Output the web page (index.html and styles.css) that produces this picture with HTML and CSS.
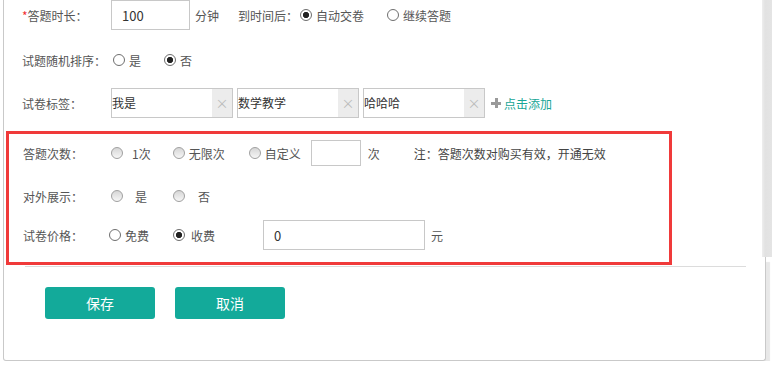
FILE: index.html
```html
<!DOCTYPE html>
<html lang="zh">
<head>
  <meta charset="UTF-8" />
  <title>试卷设置</title>
  <link rel="stylesheet" href="styles.css">
</head>
<body>

  <div class="panel">
    <div class="scroll">
      <div class="content">

        <div class="row row-time">
          <span class="label"><i class="req">*</i>答题时长：</span>
          <input class="field time-input" type="text" value="100" />
          <span class="unit">分钟</span>
          <span class="sub-label">到时间后：</span>
          <label class="opt opt-auto"><input type="radio" name="end" checked />自动交卷</label>
          <label class="opt"><input type="radio" name="end" />继续答题</label>
        </div>

        <div class="row row-order">
          <span class="label">试题随机排序：</span>
          <label class="opt opt-yes"><input type="radio" name="order" />是</label>
          <label class="opt"><input type="radio" name="order" checked />否</label>
        </div>

        <div class="row row-tags">
          <span class="label">试卷标签：</span>
          <div class="tag"><span class="tag-text">我是</span><span class="tag-del">×</span></div>
          <div class="tag"><span class="tag-text">数学教学</span><span class="tag-del">×</span></div>
          <div class="tag"><span class="tag-text">哈哈哈</span><span class="tag-del">×</span></div>
          <a class="add-tag"><span class="plus"></span>点击添加</a>
        </div>

        <div class="highlight">
          <div class="row row-times">
            <span class="label">答题次数：</span>
            <label class="opt soft opt-one"><input type="radio" name="times" /><span class="gap9">1次</span></label>
            <label class="opt soft opt-inf"><input type="radio" name="times" />无限次</label>
            <label class="opt soft opt-custom"><input type="radio" name="times" />自定义</label>
            <input class="field times-input" type="text" value="" />
            <span class="unit">次</span>
            <span class="note">注：答题次数对购买有效，开通无效</span>
          </div>

          <div class="row row-show">
            <span class="label">对外展示：</span>
            <label class="opt soft opt-show-yes"><input type="radio" name="show" /><span class="gap12">是</span></label>
            <label class="opt soft"><input type="radio" name="show" /><span class="gap13">否</span></label>
          </div>

          <div class="row row-price">
            <span class="label">试卷价格：</span>
            <label class="opt opt-free"><input type="radio" name="price" />免费</label>
            <label class="opt opt-paid"><input type="radio" name="price" checked />收费</label>
            <input class="field price-input" type="text" value="0" />
            <span class="unit">元</span>
          </div>
        </div>

      </div>
      <div class="scrollbar"></div>
    </div>

    <div class="footer">
      <div class="divider"></div>
      <div class="actions">
        <button class="btn">保存</button>
        <button class="btn">取消</button>
      </div>
    </div>
  </div>

</body>
</html>
```

FILE: styles.css
```css
body {
  margin: 0;
  padding: 0;
  background: #fff;
  font-family: "Noto Sans CJK SC", "Microsoft YaHei", sans-serif;
  font-size: 12px;
  color: #555;
}

.panel {
  margin-left: 3px;
  width: 769px;
}

.scroll {
  display: flex;
  height: 257px;
  border-left: 1px solid #c9c9c9;
}

.content {
  width: 758px;
  background: #fff;
}

.scrollbar {
  width: 10px;
  background: linear-gradient(to right, #eeeeee, #e2e2e2 30%, #e4e4e4);
}

.row {
  display: flex;
  align-items: center;
  height: 30px;
  padding-left: 18px;
  white-space: nowrap;
}

.label {
  width: 89px;
  flex-shrink: 0;
}

.req {
  font-style: normal;
  color: #f23030;
}

.row-order { margin-top: 15px; }
.row-tags { margin-top: 13px; }

.field {
  box-sizing: border-box;
  height: 30px;
  border: 1px solid #c8c8c8;
  font-family: inherit;
  font-size: 13px;
  color: #333;
  padding: 0 10px;
  outline: none;
}

.time-input { width: 79px; }

.unit { margin-left: 5px; }

.sub-label { margin-left: 19px; }

.opt {
  display: inline-flex;
  align-items: center;
  margin-right: 21px;
}

.opt input {
  -webkit-appearance: none;
  appearance: none;
  box-sizing: border-box;
  width: 12px;
  height: 12px;
  margin: 0 4px 0 2px;
  border: 1px solid #6e6e6e;
  border-radius: 50%;
  background: #fff;
}

.opt input:checked {
  background: radial-gradient(circle, #222 0 2.8px, #fff 3.4px);
}

.opt.soft input {
  margin: 0;
  border-color: #a0a0a0;
  background: linear-gradient(#d6d6d6, #f6f6f6);
}

/* tags */
.tag {
  display: flex;
  box-sizing: border-box;
  width: 122px;
  height: 30px;
  margin-right: 4px;
  border: 1px solid #c8c8c8;
}

.tag-text {
  flex: 1;
  line-height: 28px;
  color: #333;
}

.tag-del {
  width: 20px;
  background: #ececec;
  color: #bbb;
  text-align: center;
  line-height: 27px;
  font-size: 13px;
}

.add-tag {
  display: inline-flex;
  align-items: center;
  margin-left: 2px;
  color: #18a696;
  font-size: 12px;
}

.plus {
  position: relative;
  width: 10px;
  height: 10px;
  margin-right: 3px;
}

.plus::before,
.plus::after {
  content: "";
  position: absolute;
  background: #9a9a9a;
}

.plus::before { left: 0; top: 4px; width: 10px; height: 3px; }
.plus::after { left: 4px; top: 0; width: 3px; height: 10px; }

/* red box */
.highlight {
  position: relative;
  box-sizing: border-box;
  width: 666px;
  height: 134px;
  margin: 13px 0 0 2px;
  padding-top: 6px;
  border: 3px solid #f03a3a;
}

.highlight .row {
  padding-left: 14px;
}

.highlight .label { width: 88px; }

.row-times { height: 26px; }
.row-show { height: 26px; margin-top: 17px; }
.row-price { margin-top: 11px; }

.gap9 { margin-left: 9px; }
.gap12 { margin-left: 12px; }
.gap13 { margin-left: 13px; }

.opt-one { margin-right: 22px; }
.opt.soft.opt-inf input,
.opt.soft.opt-custom input { margin-right: 4px; }
.opt-inf { margin-right: 24px; }
.opt-custom { margin-right: 10px; }
.opt-show-yes { margin-right: 26px; }

.times-input {
  width: 50px;
  height: 26px;
}

.row-times .unit { margin-left: 7px; }

.note {
  margin-left: 34px;
  color: #444;
}

.row-price .label { width: 84px; }
.opt-free { margin-right: 22px; }
.opt-paid input { margin-right: 6px; }
.opt-paid { margin-right: 48px; }

.price-input { width: 162px; }
.row-price .unit { margin-left: 6px; }

/* footer */
.footer {
  box-sizing: border-box;
  width: 763px;
  height: 104px;
  padding-top: 9px;
  background: #fff;
  border: 1px solid #c9c9c9;
  border-top: 0;
  border-radius: 0 0 3px 3px;
  box-shadow: 4px 5px 1px #e8e8e8;
}

.divider {
  width: 721px;
  height: 1px;
  margin-left: 21px;
  background: #dcdcdc;
}

.actions {
  display: flex;
  gap: 20px;
  margin: 20px 0 0 41px;
}

.btn {
  width: 110px;
  height: 32px;
  border: 0;
  border-radius: 3px;
  background: #13aa9a;
  color: #fff;
  font-family: inherit;
  font-size: 14px;
  cursor: pointer;
}
```
